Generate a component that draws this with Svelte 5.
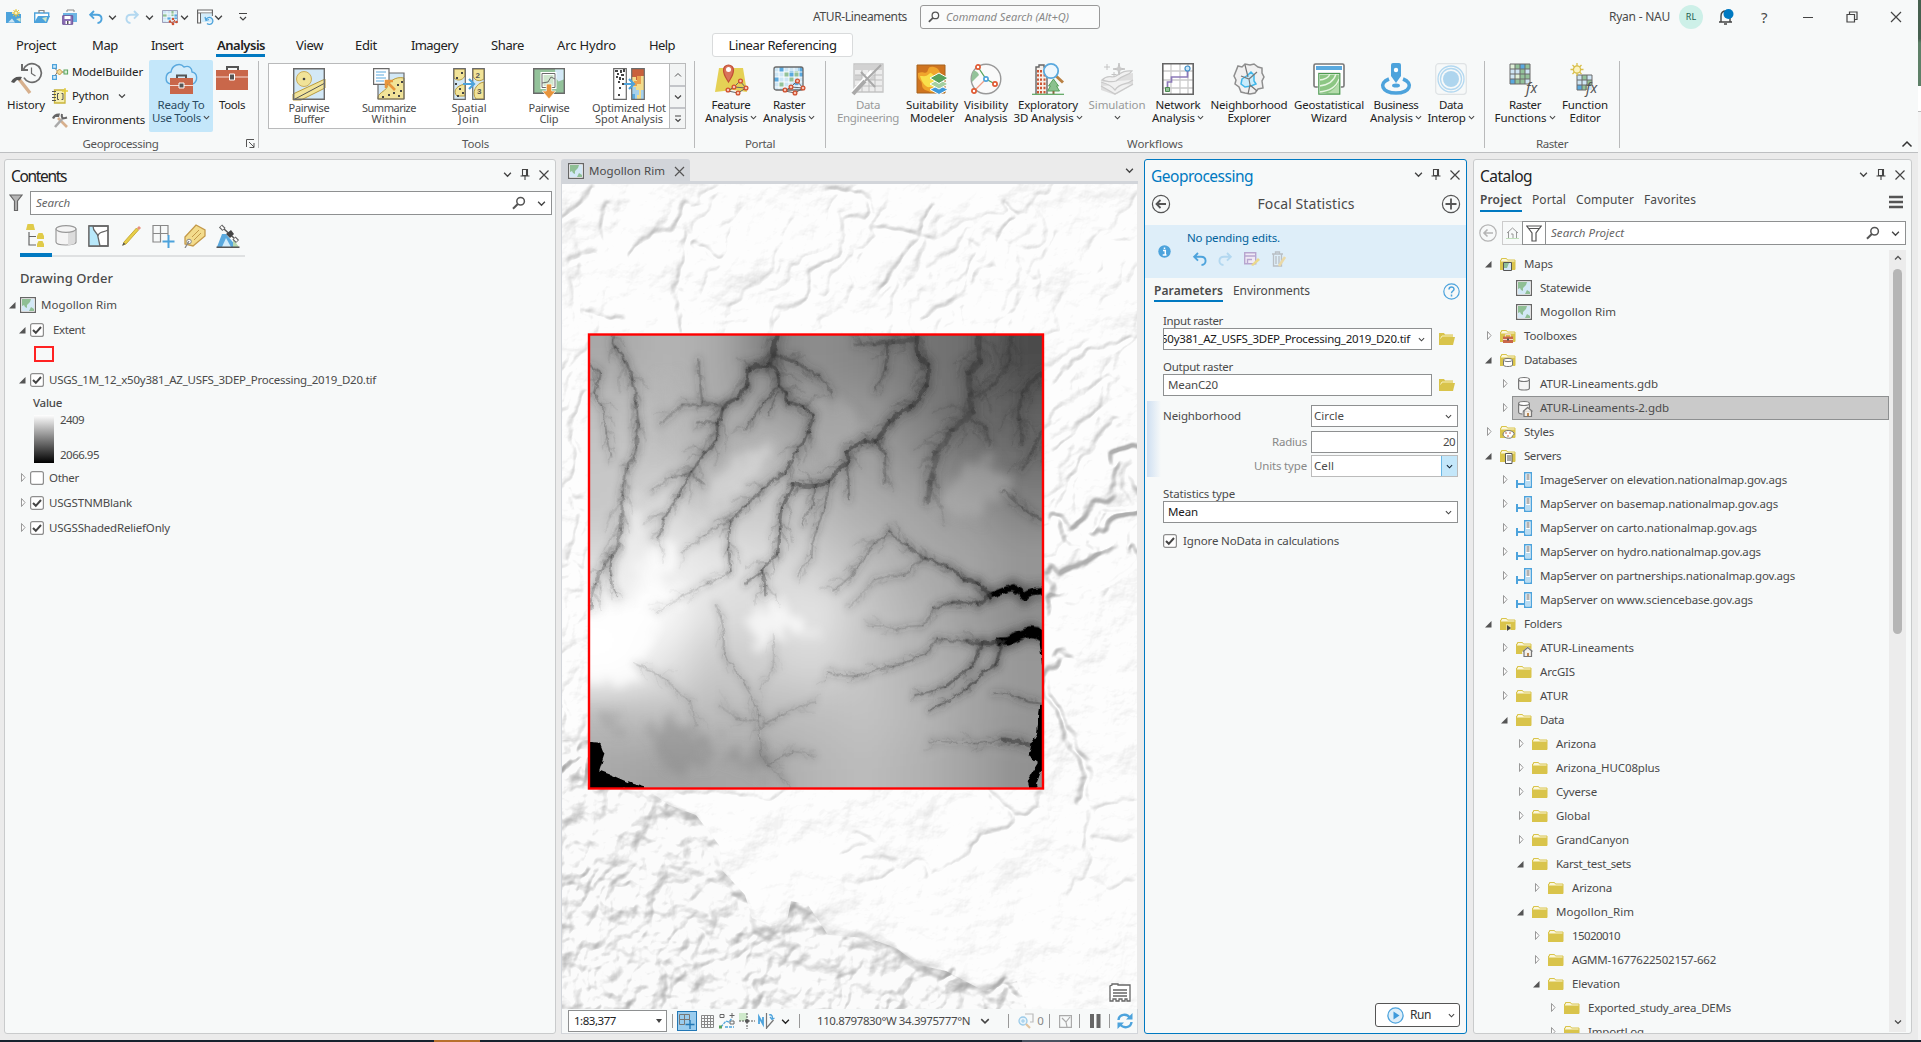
<script>
  // Tightens or loosens letter spacing so that a label takes a known width.
  function fit(node, w) {
    if (!w) return;
    const n = node.textContent.length;
    const r = node.getBoundingClientRect().width;
    node.style.letterSpacing = (w - r) / n + 'px';
  }

  const tabs = [
    ['Project', 40], ['Map', 26], ['Insert', 32], ['Analysis', 48], ['View', 27], ['Edit', 22],
    ['Imagery', 47], ['Share', 33], ['Arc Hydro', 59], ['Help', 26]
  ];
  const gallery = [
    ['pbuffer', 'Pairwise', 41, 'Buffer', 31], ['summarize', 'Summarize', 54, 'Within', 35], ['sjoin', 'Spatial', 35, 'Join', 21],
    ['pclip', 'Pairwise', 41, 'Clip', 19], ['hotspot', 'Optimized Hot', 74, 'Spot Analysis', 68]
  ];
  const portal = [['feature', 'Feature', 39, 'Analysis', 43, 1], ['rasteran', 'Raster', 32, 'Analysis', 43, 1]];
  const workflows = [
    ['dataeng', 'Data', 24, 'Engineering', 62, 0, 1], ['suit', 'Suitability', 52, 'Modeler', 44, 0],
    ['vis', 'Visibility', 44, 'Analysis', 43, 0], ['expl', 'Exploratory', 60, '3D Analysis', 60, 1],
    ['sim', 'Simulation', 57, '', 0, 1, 1], ['net', 'Network', 45, 'Analysis', 43, 1],
    ['neigh', 'Neighborhood', 77, 'Explorer', 43, 0], ['geo', 'Geostatistical', 70, 'Wizard', 36, 0],
    ['biz', 'Business', 45, 'Analysis', 43, 1], ['interop', 'Data', 24, 'Interop', 38, 1]
  ];
  const rasters = [['rfunc', 'Raster', 32, 'Functions', 52, 1], ['fedit', 'Function', 46, 'Editor', 31, 0]];

  // [level, expander, icon, label, width]
  const tree = [
    [0, 'open', 'fmap', 'Maps', 29], [1, '', 'map', 'Statewide', 51], [1, '', 'map', 'Mogollon Rim', 76],
    [0, 'shut', 'ftool', 'Toolboxes', 53], [0, 'open', 'fdb', 'Databases', 53],
    [1, 'shut', 'db', 'ATUR-Lineaments.gdb', 118], [1, 'shut', 'dbhome', 'ATUR-Lineaments-2.gdb', 129, true],
    [0, 'shut', 'fstyle', 'Styles', 30], [0, 'open', 'fserver', 'Servers', 37],
    [1, 'shut', 'server', 'ImageServer on elevation.nationalmap.gov.ags', 247],
    [1, 'shut', 'server', 'MapServer on basemap.nationalmap.gov.ags', 238],
    [1, 'shut', 'server', 'MapServer on carto.nationalmap.gov.ags', 217],
    [1, 'shut', 'server', 'MapServer on hydro.nationalmap.gov.ags', 221],
    [1, 'shut', 'server', 'MapServer on partnerships.nationalmap.gov.ags', 255],
    [1, 'shut', 'server', 'MapServer on www.sciencebase.gov.ags', 213],
    [0, 'open', 'flink', 'Folders', 38], [1, 'shut', 'fhome', 'ATUR-Lineaments', 94],
    [1, 'shut', 'folder', 'ArcGIS', 35], [1, 'shut', 'folder', 'ATUR', 28], [1, 'open', 'folder', 'Data', 24],
    [2, 'shut', 'folder', 'Arizona', 40], [2, 'shut', 'folder', 'Arizona_HUC08plus', 104],
    [2, 'shut', 'folder', 'Cyverse', 41], [2, 'shut', 'folder', 'Global', 34], [2, 'shut', 'folder', 'GrandCanyon', 73],
    [2, 'open', 'folder', 'Karst_test_sets', 75], [3, 'shut', 'folder', 'Arizona', 40],
    [2, 'open', 'folder', 'Mogollon_Rim', 78], [3, 'shut', 'folder', '15020010', 48],
    [3, 'shut', 'folder', 'AGMM-1677622502157-662', 144], [3, 'open', 'folder', 'Elevation', 48],
    [4, 'shut', 'folder', 'Exported_study_area_DEMs', 143], [4, 'shut', 'folder', 'ImportLog', 56]
  ];

  // Mean grey of the elevation raster on a 9 x 9 grid
  const tone = [
    [168, 180, 172, 128, 142, 132, 118, 110, 76],
    [190, 188, 170, 162, 148, 152, 128, 108, 96],
    [198, 196, 176, 190, 166, 160, 146, 118, 112],
    [200, 222, 196, 206, 186, 174, 164, 154, 132],
    [218, 236, 232, 220, 206, 188, 170, 165, 152],
    [252, 250, 222, 220, 230, 198, 180, 158, 140],
    [255, 230, 200, 208, 216, 196, 180, 166, 152],
    [188, 192, 188, 188, 190, 195, 183, 165, 150],
    [168, 162, 166, 168, 182, 188, 178, 164, 145]
  ];
  const cells = tone.flatMap((row, j) =>
    row.map((v, i) => ({
      x: i === 0 ? -60 : 27 + i * 50.4,
      y: j === 0 ? 60 : 155 + j * 50.4,
      w: i === 0 || i === 8 ? 138 : 51,
      h: j === 0 || j === 8 ? 146 : 51,
      c: `rgb(${v},${v},${v})`
    }))
  );

  // Drainage lines of the elevation raster: [start width, end width, darkness, tributary length, x1, y1, ...]
  const rivers = [
    [7, 8, 0.5, 34, 145, 440, 150, 470, 175, 500, 195, 545, 205, 600, 212, 650, 208, 710, 180, 755, 170, 820, 165, 900, 155, 950, 120, 985, 95, 1030, 84, 1090],
    [6, 3, 0.4, 22, 140, 960, 135, 1010, 155, 1060],
    [6, 4, 0.4, 26, 82, 512, 108, 530, 95, 580, 115, 610, 125, 670, 140, 730],
    [15, 6, 0.78, 36, 587, 440, 578, 490, 560, 515],
    [10, 4, 0.74, 38, 560, 515, 510, 520, 505, 560, 480, 590, 440, 615, 425, 650, 425, 685, 390, 720, 355, 765, 320, 820, 280, 880, 262, 925],
    [9, 5, 0.7, 34, 565, 505, 590, 535, 590, 560, 612, 580, 618, 600, 660, 610, 685, 630, 670, 670, 640, 715, 610, 765, 550, 805, 500, 845, 460, 885, 455, 950, 462, 1000],
    [5, 3, 0.25, 24, 460, 880, 390, 915, 330, 955],
    [4, 2, 0.25, 24, 462, 1000, 400, 1030, 330, 1060, 260, 1100],
    [5, 3, 0.5, 20, 585, 565, 550, 600, 520, 640, 500, 665],
    [4, 2, 0.4, 15, 590, 575, 565, 630],
    [9, 4, 0.5, 28, 580, 485, 640, 505, 700, 535, 735, 575],
    [12, 6, 0.74, 38, 965, 440, 968, 490, 995, 510, 990, 560, 950, 610, 890, 645, 855, 690, 825, 690, 775, 715, 780, 740, 725, 790, 690, 800, 630, 795, 600, 850, 595, 900, 590, 960, 545, 1000, 555, 1060],
    [8, 4, 0.45, 22, 855, 690, 880, 720, 878, 790],
    [6, 3, 0.35, 22, 725, 790, 715, 850, 695, 900, 680, 970, 640, 1010],
    [6, 3, 0.4, 16, 775, 745, 780, 830],
    [5, 3, 0.35, 15, 690, 800, 680, 850, 655, 890],
    [6, 3, 0.4, 20, 545, 1000, 500, 1030],
    [16, 14, 0.62, 50, 1132, 440, 1135, 500, 1105, 530, 1110, 580, 1115, 620, 1060, 665, 1015, 720, 1000, 790, 995, 830],
    [9, 4, 0.4, 28, 1110, 640, 1150, 660, 1160, 700],
    [9, 6, 0.6, 34, 1302, 530, 1250, 580, 1240, 640, 1250, 700],
    [11, 5, 0.5, 34, 1220, 440, 1215, 500, 1170, 560, 1120, 590],
    [8, 4, 0.45, 34, 1302, 670, 1275, 720, 1250, 760],
    [8, 4, 0.4, 20, 1302, 878, 1250, 850, 1200, 810],
    [6, 4, 0.35, 26, 375, 500, 385, 600, 440, 610],
    [5, 3, 0.35, 22, 425, 608, 330, 605, 270, 650],
    [5, 3, 0.35, 20, 425, 650, 370, 650],
    [5, 3, 0.3, 20, 355, 765, 300, 775, 245, 810],
    [5, 3, 0.3, 16, 355, 765, 390, 795],
    [12, 5, 0.5, 30, 960, 450, 900, 455, 850, 462, 800, 462],
    [8, 4, 0.45, 26, 885, 460, 880, 520, 850, 570],
    [20, 11, 1, 20, 1303, 1048, 1255, 1060, 1225, 1040, 1165, 1058],
    [10, 6, 0.8, 22, 1165, 1058, 1130, 1030, 1090, 1020, 1050, 990, 985, 970],
    [6, 3, 0.45, 26, 985, 970, 940, 940, 890, 905, 850, 935, 790, 1010, 740, 1045],
    [4, 2, 0.3, 18, 985, 970, 930, 1010, 850, 1020, 780, 1090],
    [8, 4, 0.7, 16, 1165, 1058, 1130, 1080, 1060, 1075, 1010, 1090],
    [4, 2, 0.32, 22, 1010, 1090, 980, 1130, 910, 1140, 830, 1130],
    [28, 16, 1, 12, 1303, 1155, 1270, 1145, 1225, 1160, 1190, 1168],
    [11, 6, 0.8, 16, 1190, 1168, 1140, 1170, 1100, 1165],
    [5, 3, 0.42, 22, 1100, 1165, 1020, 1160, 990, 1195, 900, 1225, 800, 1250, 720, 1240],
    [7, 3, 0.65, 16, 1140, 1175, 1110, 1230, 1040, 1275, 960, 1295],
    [8, 3, 0.7, 16, 1200, 1168, 1180, 1220, 1100, 1280, 1000, 1330],
    [9, 3, 0.65, 20, 1270, 1415, 1200, 1400],
    [4, 2, 0.3, 24, 1200, 1400, 1120, 1410, 1000, 1405],
    [5, 2, 0.42, 22, 1300, 1315, 1240, 1300, 1170, 1290],
    [4, 3, 0.22, 26, 420, 1080, 435, 1110, 445, 1200, 500, 1270, 540, 1340, 540, 1400, 545, 1440, 600, 1490, 620, 1514],
    [4, 3, 0.16, 22, 575, 1150, 575, 1230, 540, 1280],
    [4, 3, 0.22, 26, 540, 1370, 600, 1340, 690, 1310],
    [4, 3, 0.18, 28, 200, 1220, 290, 1260, 350, 1310, 370, 1370],
    [4, 3, 0.18, 24, 540, 1360, 480, 1350, 430, 1320],
    [4, 3, 0.2, 24, 560, 1460, 630, 1430, 690, 1440]
  ];

  let seed = 7;
  const rnd = () => (seed = (seed * 16807) % 2147483647) / 2147483647;

  function strokes() {
    const out = [];
    for (const [w0, w1, dark, len, ...p] of rivers) {
      const n = p.length / 2;
      for (let i = 0; i < n - 1; i++) {
        const [x1, y1, x2, y2] = p.slice(i * 2, i * 2 + 4);
        const f = i / (n - 1);
        const w = w0 + (w1 - w0) * f;
        const mx = (x1 + x2) / 2 + (rnd() - 0.5) * 9;
        const my = (y1 + y2) / 2 + (rnd() - 0.5) * 9;
        out.push({ d: `M${x1} ${y1}L${mx.toFixed(1)} ${my.toFixed(1)}L${x2} ${y2}`, w, o: dark > 0.95 ? 1 : dark * (1 - f * 0.45), main: true });
        const L = Math.hypot(x2 - x1, y2 - y1);
        const ux = (x2 - x1) / L;
        const uy = (y2 - y1) / L;
        const k = Math.max(1, Math.round(L / 17));
        for (let j = 0; j < k; j++) {
          const t = (j + rnd()) / k;
          const s = rnd() > 0.5 ? 1 : -1;
          const l = len * (0.35 + rnd() * rnd() * 1.6);
          const a = 0.3 + rnd() * 0.8;
          const dx = ux * a - uy * s;
          const dy = uy * a + ux * s;
          const sx = x1 + (x2 - x1) * t;
          const sy = y1 + (y2 - y1) * t;
          const bx = sx + dx * l * 0.55;
          const by = sy + dy * l * 0.55;
          const ex = bx + (ux * 0.9 + dx * 0.4) * l * 0.5;
          const ey = by + (uy * 0.9 + dy * 0.4) * l * 0.5;
          const c = [sx, sy, bx, by, ex, ey].map((v) => v.toFixed(1));
          const o = Math.min(dark, 0.55) * 0.38;
          out.push({ d: `M${c[0]} ${c[1]}L${c[2]} ${c[3]}`, w: Math.min(w * 0.7, 7), o, main: false });
          out.push({ d: `M${c[2]} ${c[3]}L${c[4]} ${c[5]}`, w: 4, o: o * 0.65, main: false });
        }
      }
    }
    return out;
  }
  const lines = strokes();

  // A meandering creek that starts at x, y and heads along angle a
  function creek(x, y, a, steps, step) {
    let d = `M${x.toFixed(0)} ${y.toFixed(0)}`;
    for (let i = 0; i < steps; i++) {
      const b = a + (rnd() - 0.5) * 1.3;
      x += Math.cos(b) * step;
      y += Math.sin(b) * step;
      d += `L${x.toFixed(0)} ${y.toFixed(0)}`;
    }
    return d;
  }
  let creeks = '';
  for (let i = 0; i < 60; i++) creeks += creek(rnd() * 600, rnd() * 190, 2.1 + (rnd() - 0.5) * 0.9, 3 + Math.floor(rnd() * 6), 12);
  for (let i = 0; i < 18; i++) creeks += creek(490 + rnd() * 100, 150 + rnd() * 220, 2.3 + (rnd() - 0.5) * 0.5, 6, 12);
  for (let i = 0; i < 14; i++) creeks += creek(rnd() * 40, 150 + rnd() * 400, 1.9, 6, 11);
  let gullies = '';
  for (let i = 0; i < 210; i++) {
    const x = rnd() * 470;
    const rim = x < 190 ? 600 + x * 0.75 : 742 + (x - 190) * 0.22;
    gullies += creek(x, rim + rnd() * 210, 2.05 + (rnd() - 0.5) * 0.4, 3 + Math.floor(rnd() * 5), 8);
  }
</script>

{#snippet t(text, w, cls = '')}<span class="t {cls}" use:fit={w}>{text}</span>{/snippet}

{#snippet chev(s = 8, c = '#444')}
  <svg class="chev" width={s} height={s} viewBox="0 0 8 8" fill="none" stroke={c} stroke-width="1.200"><path d="M1 2.500 4 5.500 7 2.500" /></svg>
{/snippet}

{#snippet mag(c = '#555', s = 14)}
  <svg width={s} height={s} viewBox="0 0 14 14" fill="none" stroke={c} stroke-width="1.500"><circle cx="8.600" cy="5.200" r="3.800" /><path d="M5.800 8 1 12.800" stroke-width="2" /></svg>
{/snippet}

{#snippet winbtns()}
  <div class="winbtns">
    {@render chev(9)}
    <svg width="10" height="14" viewBox="0 0 10 14" fill="none" stroke="#444" stroke-width="1.100"><path d="M2.500 1.500h5v6h-5zM6.500 1.500v6M.5 8h9M5 8v4" /></svg>
    <svg width="12" height="12" viewBox="0 0 12 12" stroke="#444" stroke-width="1.200"><path d="M1.500 1.500l9 9M10.500 1.500l-9 9" /></svg>
  </div>
{/snippet}

{#snippet nodes()}
  <path d="M12 28 22 30 30 25 24 18 18 24zM12 28 18 24 30 25" fill="none" stroke="#666" />
  <g fill="#f7c4b5" stroke="#d0512f" stroke-width="1.300"><circle cx="12" cy="27" r="1.900" /><circle cx="22" cy="30" r="1.900" /><circle cx="30" cy="25" r="1.900" /><circle cx="24.500" cy="18" r="1.900" /><circle cx="18" cy="24" r="1.900" /></g>
{/snippet}

{#snippet big(name)}
  <svg class="big" width="32" height="32" viewBox="0 0 32 32" fill="none" overflow="visible">
    {#if name === 'history'}
      <circle cx="22" cy="10" r="9.300" stroke="#6b6b6b" stroke-width="1.700" stroke-dasharray="50 8" transform="rotate(-160 22 10)" />
      <path d="M21.500 4.500v6l4 2.500" stroke="#6b6b6b" stroke-width="1.200" /><path d="M12 1v6h6" stroke="#6b6b6b" stroke-width="2" />
      <path d="M9 16 20 30" stroke="#d7b08d" stroke-width="3.400" /><path d="M1 19c2-4 5-6 11-5l-2 3.500-3-.5-3 3z" fill="#555" />
    {:else if name === 'ready'}
      <path d="M6 21C-1 20 0 10 6 9 7 2 15-1 19 4c5-2 8 1 8 5 6 1 6 9 1 12" fill="#d3ecfa" stroke="#5aa9de" stroke-width="1.400" />
      <path d="M12 15v-2.500h9V15" stroke="#555" stroke-width="2" /><path d="M5 15h23v16H5z" fill="#c9674a" />
      <path d="M5 22.500h23" stroke="#f5dcd4" /><path d="M14 20h5v5h-5z" fill="#555" stroke="#fff" />
    {:else if name === 'tools'}
      <path d="M11 7V4h11v3" stroke="#555" stroke-width="2" /><path d="M0 7h32v20H0z" fill="#c9674a" />
      <path d="M0 14h32" stroke="#f5dcd4" /><path d="M13.500 11h5v6h-5z" fill="#555" stroke="#fff" />
    {:else if name === 'pbuffer'}
      <path d="M.5.5h31v31H.5z" fill="#d3e8f6" /><circle cx="11" cy="11" r="7.500" fill="#f1e398" stroke="#c9ad5c" /><circle cx="11" cy="11" r="1.300" fill="#444" />
      <path d="M0 26 32 11v9L8 32H0z" fill="#f1e398" stroke="#b79a3f" /><path d="M2 31 32 15" stroke="#555" /><path d="M.7.7h30.600v30.600H.7z" stroke="#6a6a6a" stroke-width="1.400" />
    {:else if name === 'summarize'}
      <path d="M5 5h26v26H5z" fill="#d3e8f6" /><path d="M5 31c-1-6 7-7 9-12s8-11 17-9v21z" fill="#f1e398" stroke="#b79a3f" />
      <g fill="#444"><path d="M24 16h2v2h-2zM27 22h2v2h-2zM20 24h2v2h-2zM25 27h2v2h-2zM15 26h2v2h-2zM9 28h2v2H9zM28 13h2v2h-2z" /></g>
      <path d="M5 5h26v26H5z" stroke="#6a6a6a" stroke-width="1.200" /><path d="M.6.6H16v15.800H.6z" fill="#fff" stroke="#6a6a6a" stroke-width="1.200" />
      <path d="M3 4h10M3 7h8M3 10h10M3 13h8" stroke="#5aa9de" /><path d="M22 22l-8-8M13 20v-7h7" stroke="#e8953c" stroke-width="2.600" />
    {:else if name === 'sjoin'}
      <path d="M.7.7h11.600v30.600H.7zM19.700.7h11.600v30.600H19.700z" fill="#d3e8f6" />
      <path d="M1 1h11v7c-3 5-8 5-11 2zM12 16v12H4C0 24 2 18 12 16M20 1h11v10c-6 4-11 0-11-4zM31 14v17h-8c-5-6 0-16 8-17" fill="#f1e398" stroke="#b79a3f" />
      <g fill="#444"><path d="M3 9h2v2H3zM8 4h2v2H8zM6 20h2v2H6zM9 24h2v2H9zM4 27h2v2H4zM2 15h2v2H2z" /></g>
      <path d="M.7.7h11.600v30.600H.7zM19.700.7h11.600v30.600H19.700z" stroke="#6a6a6a" stroke-width="1.200" />
      <text x="22.500" y="9.500" class="num">2</text><text x="24" y="26" class="num">3</text>
      <path d="M10 16h10M16 11l5 5-5 5" stroke="#4da3dc" stroke-width="2.200" />
    {:else if name === 'pclip'}
      <path d="M.7.700h30.600v24.600H.7z" fill="#93c29a" stroke="#6a6a6a" stroke-width="1.400" /><path d="M22 1.500h8.500v10l-5 2-3-4z" fill="#d3e8f6" />
      <path d="M9 5.500h13v14H9z" fill="#cfe6cd" stroke="#fff" stroke-width="3" /><path d="M9 5.500h13v14H9zM9 15l6-1 3-5 4 2" stroke="#6a6a6a" />
      <path d="M13.300 16h5.400v7h4L16 31l-6.700-8h4z" fill="#e8953c" stroke="#fff" stroke-width=".7" />
    {:else if name === 'hotspot'}
      <path d="M.7.700h12.600v30.600H.7z" fill="#fff" stroke="#6a6a6a" stroke-width="1.200" /><path d="M18.700.700h12.600v30.600H18.700z" fill="#f3dc8c" />
      <path d="M19 1h12v7h-3v4h-5V9h-4z" fill="#c9603c" /><path d="M24 8h4v8h-4zM21 13h3v5h-3z" fill="#eaa04f" /><path d="M19 19h4v3h3v5h-2v4h-5zM28 22h3v9h-3z" fill="#a5d0ec" />
      <path d="M19 26h3v5h-3z" fill="#5aa9de" /><path d="M18.700.700h12.600v30.600H18.700z" stroke="#6a6a6a" stroke-width="1.200" />
      <g fill="#444"><path d="M2 2h3v2H2zM7 2h2v3H7zM10 1h2v3h-2zM4 5h2v2H4zM8 6h3v2H8zM3 8h2v2H3zM6 9h2v3H6zM9 10h2v2H9zM5 13h2v2H5zM9 15h2v2H9zM6 19h2v2H6zM5 26h2v2H5z" /></g>
      <path d="M11 16h9M16 11l5 5-5 5" stroke="#4da3dc" stroke-width="2.200" />
    {:else if name === 'feature'}
      <path d="M4 5h24l4 24-14-2-18 2z" fill="#e5d155" /><path d="M13.500 19c-3-5-5-7-5-12a5 5 0 0 1 10 0c0 5-2 7-5 12z" fill="#d9735a" stroke="#c24f34" stroke-width="1.200" /><circle cx="13.500" cy="6.500" r="2.500" fill="#fff" />
      <g transform="translate(1 0)">{@render nodes()}</g>
    {:else if name === 'rasteran'}
      <rect x="1" y="4" width="29" height="23" rx="2" fill="#cde6f5" />
      <path d="M6 4h5v5H6zM16 8h5v6h-5zM1 14h5v5H1zM25 4h5v10h-5zM20 18h6v4h-6z" fill="#5aa9de" /><path d="M11 9h5v5h-5zM16 14h5v5h-5zM21 8h5v6h-5zM6 19h5v5H6z" fill="#93c29a" />
      <path d="M6 4v23M11 4v23M16 4v23M21 4v23M26 4v23M1 9h29M1 14h29M1 19h29M1 24h29" stroke="#fff" stroke-width=".9" /><rect x="1" y="4" width="29" height="23" rx="2" stroke="#6a6a6a" stroke-width="1.300" />
      {@render nodes()}
    {:else if name === 'dataeng'}
      <path d="M2 1h29v28H2z" fill="#ececec" stroke="#c4c4c4" stroke-width="1.300" /><path d="M3 2h27v5H3zM3 12h7v5H3z" fill="#d2d2d2" /><path d="M17 12h6v5h-6z" fill="#d2d2d2" /><path d="M3 12h27M3 17h27M3 23h27M10 7v22M17 7v22M23 7v22" stroke="#bebebe" />
      <path d="M1 30 20 9" stroke="#fff" stroke-width="5" /><path d="M1 31 13 18" stroke="#a9a9a9" stroke-width="4" /><path d="M13 18 29 2M9 9l14 15" stroke="#a9a9a9" stroke-width="2" />
    {:else if name === 'suit'}
      <path d="M1 2h28v28H1z" fill="#cf7420" /><path d="M2 10c5-2 7 1 9-1s0-6 7-5 4 8 11 9v17H15c-2-3-9-2-9-8s-5-4-4-12" fill="#f0a52c" /><path d="M4 13c4 0 6 1 9-2s3 1 6 2 5 5 9 5v6H14c-4 1-8-4-10-11" fill="#f9e04b" />
      <path d="M1 2h28v28H1z" stroke="#a6621e" />
      <path d="M23 22l9 4.500-9 5-9-5z" fill="#3f9adb" stroke="#fff" /><path d="M23 16l9 5-9 5-9-5z" fill="#a5d0a0" stroke="#fff" /><path d="M23 10l9 5-9 5.500-9-5.500z" fill="#58a35c" stroke="#fff" />
    {:else if name === 'vis'}
      <circle cx="16" cy="16" r="14.800" stroke="#999" stroke-width="1.400" fill="#fafafa" /><path d="M3 8c2-1 5 1 6 4l-7 7c-1-4 0-8 1-11" fill="#93c29a" />
      <path d="M8 4l8 12 9 5" stroke="#58a35c" stroke-width="1.300" /><path d="M16 16 4 28" stroke="#ef9f86" stroke-width="1.300" />
      <g fill="#fff" stroke="#e05a33" stroke-width="1.700"><circle cx="8" cy="4" r="2.100" /><circle cx="4" cy="28" r="2.100" /><circle cx="25" cy="21" r="2.100" /></g><circle cx="16" cy="16" r="2.100" fill="#fff" stroke="#4da3dc" stroke-width="1.700" />
    {:else if name === 'expl'}
      <path d="M4 31V4h3V2h5v2h3v27" stroke="#666" stroke-width="1.400" fill="#f6efe9" /><path d="M6 7v24M9 7v24M12.500 7v24" stroke="#cc5533" stroke-width="2" stroke-dasharray="2.400 1.800" />
      <path d="M21.500 16l5 7h-2l3 5h-12l3-5h-2z" fill="#8cc08f" stroke="#58a35c" /><path d="M21.500 28v3" stroke="#8a6a40" stroke-width="2" /><path d="M0 31.300h32" stroke="#58a35c" stroke-width="1.200" />
      <path d="M24 13l7 6.500" stroke="#b98043" stroke-width="3" /><circle cx="19" cy="8" r="7.200" fill="#eef7fd" stroke="#5aa9de" stroke-width="1.800" />
    {:else if name === 'sim'}
      <path d="M0 19l14-6 18-3v12L14 32 0 27z" fill="#dedede" /><path d="M0 19c7 2 11 4 14 8 6-8 10-4 18-10M0 23l14 8 18-10M1 17c7-7 9-1 14-4s9-6 16-5c-3 5-8 3-16 10-5 2-9 0-14-1z" fill="#f1f1f1" stroke="#c9c9c9" stroke-width="1.300" />
      <path d="M18 0l1 5 5 1-5 1-1 5-1-5-5-1 5-1zM6 1v6M3 4h6M13 9v5M10.500 11.500h5" stroke="#c4c4c4" fill="#ccc" />
    {:else if name === 'net'}
      <path d="M.8.800h30.400v30.400H.8z" fill="#fff" /><path d="M0 8h32M0 17h32M0 25h32M9 0v32M18 0v32M26 0v32" stroke="#ccc" stroke-width="1.300" /><path d="M.8.800h30.400v30.400H.8z" stroke="#666" stroke-width="1.600" />
      <path d="M5.500 26v-7h4v-5h16V7" stroke="#8c79b8" stroke-width="1.700" /><path d="M3.500 24.500h4v4h-4z" fill="#93c29a" stroke="#4c8a50" /><circle cx="25.500" cy="5.500" r="2.500" fill="#cde6f5" stroke="#3f8fc9" stroke-width="1.200" />
    {:else if name === 'neigh'}
      <path d="M5 3l4 1 3-3 5 1 4-1 4 3 4 1v5l2 4-2 4 1 7-5 1-3 4-5 1-5-1-4-1-2-5-4-3 1-4-2-4 2-5z" fill="#f1f1f1" stroke="#8e8e8e" stroke-width="1.500" />
      <path d="M9 16l6-4 3-3 3 3v6l2 3-5 2-6 1-4-3z" fill="#c9ecfb" stroke="#3fb6ea" stroke-width="1.500" /><path d="M12 2l3 12M24 9l-8 7-8-3M16 16l1 6-2 9M17 22l7 6" stroke="#777" stroke-width="1.200" />
    {:else if name === 'geo'}
      <rect x="1" y="1" width="30" height="23" rx="1.500" fill="#fff" stroke="#777" stroke-width="1.600" /><path d="M3 3h26v4H3z" fill="#5aa9de" /><path d="M5 10h22v12" stroke="#999" />
      <path d="M5.800 10.500h21v20.700h-21z" fill="#8cc683" stroke="#fff" stroke-width="2" /><path d="M27 14v17H12c7-2 14-8 15-17" fill="#b4dcab" />
      <path d="M6 17c6 0 10-3 11-6M6 23c10-1 15-5 17-12M6 29c12-1 18-7 20-13" stroke="#e8f6e3" stroke-width="1.300" /><path d="M5.800 10.500h21v20.700h-21z" stroke="#4c9a50" stroke-width="1.200" />
    {:else if name === 'biz'}
      <path d="M11 2a2 2 0 0 1 2-2h6a2 2 0 0 1 2 2v11l-5 7-5-7z" fill="#4da3dc" /><circle cx="16" cy="7" r="2.200" fill="#fff" /><ellipse cx="16" cy="22.500" rx="4" ry="2" fill="#4da3dc" />
      <path d="M9 16c-11 4-7 14 7 14s18-10 7-14" stroke="#4da3dc" stroke-width="3.600" />
    {:else if name === 'interop'}
      <rect x=".7" y=".7" width="30.600" height="30.600" rx="3" stroke="#dfe3e5" stroke-width="1.200" /><g stroke="#b3d8f0" stroke-width="1.300"><circle cx="16" cy="16" r="13" /><circle cx="16" cy="16" r="10.500" /></g><circle cx="16" cy="16" r="8" fill="#aed5ee" />
    {:else if name === 'rfunc'}
      <path d="M1 1h20v20H1z" fill="#cfe6f5" /><path d="M6 1h5v5H6zM16 1h5v5h-5zM11 6h5v10h-5zM16 11h5v5h-5zM6 16h10v5H6z" fill="#93c29a" /><path d="M11 1h5v5h-5zM1 16h5v5H1z" fill="#5aa9de" /><path d="M1 1h5v5H1zM6 11h5v5H6z" fill="#dff0d8" />
      <path d="M1 1h20v20H1zM6 1v20M11 1v20M16 1v20M1 6h20M1 11h20M1 16h20" stroke="#6a6a6a" /><text x="17" y="30" class="fx">fx</text>
    {:else if name === 'fedit'}
      <path d="M8 12h15v15H8z" fill="#cfe6f5" /><path d="M13 12h5v5h-5zM13 22h5v5h-5zM18 17h5v5h-5z" fill="#93c29a" /><path d="M8 22h5v5H8z" fill="#5aa9de" />
      <path d="M8 12h15v10h-6v5H8zM13 12v15M18 12v10M8 17h15M8 22h10" stroke="#6a6a6a" /><path d="M8 0v13M1.500 6.500h13M3.500 2l9 9M12.500 2l-9 9" stroke="#d9bf4a" stroke-width="1.300" /><circle cx="8" cy="6.500" r="3.600" fill="#fbf3c0" stroke="#d9bf4a" stroke-width="1.300" />
      <text x="17" y="30" class="fx">fx</text>
    {/if}
  </svg>
{/snippet}

{#snippet foldr()}
  <path d="M.5 13.500V4h1V2.500h5L7.500 4h7.500v9.500z" fill="#fbf7dc" stroke="#d9c44b" /><path d="M0 5.500h15V14H0z" fill="#d9c44b" />
{/snippet}
{#snippet house()}
  <path d="M7 11.500 11.700 7.500l4.800 4M8 11v5.500h7.500V11" fill="#f3efe9" stroke="#777" stroke-width="1.200" /><path d="M11 13h2v3h-2z" fill="#c08a50" />
{/snippet}

{#snippet small(name)}
  <svg class="small" width="16" height="16" viewBox="0 0 16 16" fill="none" overflow="visible">
    {#if name === 'folder'}{@render foldr()}
    {:else if name === 'fmap'}{@render foldr()}<path d="M3.500 6.500h8v8h-8z" fill="#d3e8f6" stroke="#555" /><path d="M4 7h5l-2 5H4z" fill="#8fbf95" />
    {:else if name === 'ftool'}{@render foldr()}<path d="M3 8.500h10V15H3z" fill="#c9674a" /><path d="M5.500 8.500v-2h5v2M3 11.500h10" stroke="#f3d5ca" /><path d="M7 10.500h2v2H7z" fill="#555" />
    {:else if name === 'fdb'}{@render foldr()}<path d="M3.500 8v5c0 2 9 2 9 0V8z" fill="#fff" stroke="#777" /><ellipse cx="8" cy="8" rx="4.500" ry="1.600" fill="#fff" stroke="#777" />
    {:else if name === 'fstyle'}{@render foldr()}<path d="M3 10c1-5 9-4 11-1 1 2-2 2-2 4s-9 2-9-3" fill="#fff" stroke="#777" /><path d="M5 9h2M9 9h2M7 12h2" stroke="#c9674a" />
    {:else if name === 'fserver'}{@render foldr()}<path d="M5.500 5.500h6.500V15.500H5.500z" fill="#fff" stroke="#555" /><path d="M7 8h4M7 10h4M7 12h4" stroke="#555" />
    {:else if name === 'flink'}{@render foldr()}<path d="M6 8h5v6H6z" fill="#e9dd8f" /><path d="M7 9l4 3-4 3z" fill="#444" />
    {:else if name === 'fhome'}{@render foldr()}<path d="M6 12 11.700 6.500 18 12v5H7z" fill="#f7f9f9" />{@render house()}
    {:else if name === 'map'}<path d="M.6.600h14.800v14.800H.6z" fill="#fff" stroke="#666" stroke-width="1.200" /><path d="M2 2h12v12H2z" fill="#d3e8f6" /><path d="M2 2h9l-1 3-3 3v3l-2-1-1-2-2 1zM11 10l3 2v2H9z" fill="#8fbf95" />
    {:else if name === 'db' || name === 'dbhome'}<path d="M2.600 3.500v8.700c0 2.400 10.800 2.400 10.800 0V3.500z" fill="#f4f4f4" stroke="#777" stroke-width="1.200" /><ellipse cx="8" cy="3.500" rx="5.400" ry="2" fill="#fff" stroke="#777" stroke-width="1.200" />
      {#if name === 'dbhome'}<path d="M6 12 11.700 6.500 18 12v5H7z" fill="#cacaca" />{@render house()}{/if}
    {:else if name === 'server'}<path d="M8.700.700h6.600v14.600H8.700z" fill="#fff" stroke="#4da3dc" stroke-width="1.400" /><path d="M10.500 3h3M10.500 5h3M10.500 7h3" stroke="#666" /><path d="M9.500 9h5v5h-5z" fill="#b9dcf2" /><path d="M1 8v8M1 12h7" stroke="#4da3dc" stroke-width="2" />
    {:else if name === 'open'}<path d="M11.500 5v6.500H5z" fill="#555" />
    {:else if name === 'shut'}<path d="M7.500 3.500v8l3.500-4z" fill="#fff" stroke="#999" />
    {:else if name === 'model'}<path d="M.6.600h3.800v3.800H.6zM.6 11.500h3.800v3.800H.6z" fill="#d3ecfa" stroke="#4da3dc" stroke-width="1.200" /><path d="M3 4.500l3 3-3 4M9 8h3" stroke="#777" /><path d="M7.500 5 10.500 8l-3 3-3-3z" fill="#f3dc9c" stroke="#c9973c" /><rect x="12" y="6" width="3.600" height="4" fill="#d9efd8" stroke="#58a35c" />
    {:else if name === 'python'}<path d="M2.500 2H13v13H2.500z" fill="#f5eeb0" stroke="#c9b43a" stroke-width="1.300" /><path d="M0 3.500h4M0 6.500h4M0 9.500h4M0 12.500h4" stroke="#555" /><path d="M7 5.500H5.500v6H7M9.500 5.500H11v6H9.500" stroke="#555" /><path d="M13 0v6M10 3h6" stroke="#e5cf3f" stroke-width="1.400" />
    {:else if name === 'env'}<path d="M6 6l9 9" stroke="#d7b08d" stroke-width="2.600" /><path d="M3 15 11 6" stroke="#aaa" stroke-width="2.600" /><path d="M0 6C1 3 4 1 8 1.500L7 5 3.500 5 2 7z" fill="#666" /><path d="M10 2c-1 4 1 5 5 3.500" stroke="#666" stroke-width="2" />
    {:else if name === 'qnew'}<path d="M1 5h15v9H1z" fill="#4da3dc" /><path d="M1 3h6v3H1z" fill="#4da3dc" /><path d="M3 13.500 7 9.500l3 4z" fill="#cde6f5" /><path d="M11 10l4.500-1v4z" fill="#cfe7c9" /><path d="M11 0v8M7 4h8M8.500 1l5.500 6M14 1 8 7" stroke="#e0c63e" /><circle cx="11" cy="4" r="2" fill="#fbf3c0" stroke="#d9bf4a" />
    {:else if name === 'qopen'}<path d="M.7 14V4h14v4" stroke="#4da3dc" stroke-width="1.400" fill="#fff" /><path d="M5 4V1.500h5V4" stroke="#888" stroke-width="1.200" /><path d="M0 14 4 7h12l-3 7z" fill="#4da3dc" /><path d="M8 9l5-1-1 5z" fill="#cfe7c9" />
    {:else if name === 'qsave'}<path d="M1 4h14v9H1z" fill="#6db5e4" /><path d="M5 3V1h7v2" stroke="#888" /><path d="M.7 6.700h10v8.600H.7z" fill="#8c6fb5" stroke="#6e5699" /><path d="M2.500 7h6v3h-6zM3.500 12h5v3h-5z" fill="#fff" /><path d="M5 12h1.500v3H5z" fill="#555" />
    {:else if name === 'undo' || name === 'redo'}
      <g transform={name === 'redo' ? 'matrix(-1 0 0 1 14 0)' : ''} stroke={name === 'redo' ? '#b3d8f0' : '#4da3dc'} stroke-width="1.900"><path d="M5 2 1.200 5.800 5 9.600M1.500 5.800H8c6 0 6 8 .5 8.200" /></g>
    {:else if name === 'qmap'}<path d="M1 2h14v11H1z" fill="#cde6f5" /><path d="M1 5h4v3H1zM9 2h3v5H9z" fill="#8fbf95" /><path d="M5 8h4v3H5zM12 5h3v5h-3z" fill="#5aa9de" /><path d="M1 5h14M1 8h14M1 11h14M5 1v13M9 1v13M12 1v13" stroke="#fff" stroke-width=".7" /><path d="M.5 1.500h15v12H.5z" stroke="#88a" stroke-width=".8" /><path d="M9 14l4-2-2-2" stroke="#d0512f" /><g fill="#d0512f"><circle cx="8" cy="12.500" r="1.300" /><circle cx="11" cy="10" r="1.300" /><circle cx="14.500" cy="13" r="1.300" /><circle cx="11" cy="15" r="1.300" /></g>
    {:else if name === 'qlay'}<path d="M.6 1h14.800v3H.6zM.6 4h3v10h-3z" fill="#fff" stroke="#666" stroke-width="1.200" /><path d="M4 4.500h11V13H4z" fill="#d3ecfa" /><path d="M15.400 4v3" stroke="#666" /><path d="M9 11a3.500 3.500 0 1 1 1 3.500M8 8l1 3.500 3-1" stroke="#4da3dc" stroke-width="1.300" />
    {/if}
  </svg>
{/snippet}

{#snippet cmd(c)}
  <div class="cmd" class:off={c[6]}>
    {@render big(c[0])}
    <div class="lab">{@render t(c[1], c[2])}</div>
    <div class="lab">{#if c[3]}{@render t(c[3], c[4])}{/if}{#if c[5]}{@render chev(7)}{/if}</div>
  </div>
{/snippet}

{#snippet check(on)}
  <svg class="check" width="14" height="14" viewBox="0 0 14 14" fill="none"><rect x=".6" y=".6" width="12.800" height="12.800" rx="2" fill="#fff" stroke="#8e8e8e" stroke-width="1.200" />{#if on}<path d="M3 7l2.800 2.800L11 4" stroke="#444" stroke-width="2" />{/if}</svg>
{/snippet}

{#snippet ground()}
  <rect x="-60" y="-60" width="700" height="960" fill="#a0a0a0" />
  <path d="M-60 560H60L76 608 103 627 130 637 153 667 156 690 179 717 187 740 210 747 227 743 231 723 244 727 264 757 306 760 332 770 355 787 382 793 420 813 453 803 463 900H-60z" fill="#6c6c6c" filter="url(#edge)" />
  <g fill="none" filter="url(#bank)">
    <path d={creeks} stroke="#929292" stroke-width="4" />
    <path d={gullies} stroke="#5c5c5c" stroke-width="4" />
    <g transform="translate(-12 600) scale(.38265 .33333)" stroke-width="13">
      <path d="M1130 30 1210 95 1250 110 1278 90 1275 40 M1215 100 1200 130 1165 155 1125 160 1110 215 1050 240 990 300" stroke="#868686" />
      <path d="M820 235 905 235 910 260 850 300 770 320 M930 270 960 240 985 260 990 300 M330 30 540 50 620 40 M800 150 830 190 770 225 M1390 0 1410 100 1405 290 1450 330 1530 300 M1420 100 1530 60 M1420 180 1520 185 M1410 300 1350 360" stroke="#8e8e8e" />
    </g>
    <g transform="translate(-2 -30) scale(.3699 .42092)" stroke-width="12">
      <path d="M1490 730 1560 720 1520 780 1560 830 1460 840 1400 920 1470 930 1560 870 1500 960 1420 1000 1340 1030 1310 1000 M1560 950 1480 1010 1400 1040 1320 1080" stroke="#585858" stroke-width="34" />
      <path d="M1310 860 1350 880 1370 910 1420 935 M1530 740 1500 800 1540 850 M1315 1100 1370 1075 M1340 1190 1370 1210 1330 1250 1320 1290 1350 1340 1380 1380 1380 1420 1430 1470 1415 1560" stroke="#707070" stroke-width="18" />
      <path d="M10 170 60 130 100 85 M15 270 60 250 110 240 M60 380 110 400 180 400 M730 90 830 110 840 150 780 180 750 250 700 290 640 380 590 410 M140 120 120 210 M340 190 310 300 330 430 M1010 120 970 210 900 290 870 330 M1130 220 1100 330 1040 380 M1170 270 1060 380 980 400 M840 190 1000 215 M350 220 440 260 M180 260 300 190 350 120 M1200 110 1230 160 1190 220" stroke="#858585" />
      <path d="M70 570 30 640 45 720 15 800 60 870 15 960 60 1000 M1330 560 1420 490 1540 440 M1320 640 1400 580 1500 540 M1330 720 1480 600 M1340 850 1420 740 1510 640 M0 1300 25 1330 15 1400 M5 1420 60 1440 20 1490" stroke="#888" />
    </g>
  </g>
{/snippet}

<div class="desktop">
  <div class="app">
    <header>
      <div class="titlebar">
        <div class="qat">
          {@render small('qnew')}{@render small('qopen')}{@render small('qsave')}{@render small('undo')}{@render chev(9)}{@render small('redo')}{@render chev(9)}{@render small('qmap')}{@render chev(9)}{@render small('qlay')}{@render chev(9)}
          <svg width="10" height="10" viewBox="0 0 10 10" fill="none" stroke="#444" stroke-width="1.200"><path d="M1 1.500h8M2 5l3 3 3-3" /></svg>
        </div>
        <div class="ptitle">{@render t('ATUR-Lineaments', 94, 's12')}</div>
        <div class="cmdsearch">{@render mag('#555', 12)}{@render t('Command Search (Alt+Q)', 123, 'it s11')}</div>
        <div class="user">{@render t('Ryan - NAU', 61, 's12')}</div>
        <div class="avatar">RL</div>
        <svg class="bell" width="16" height="16" viewBox="0 0 16 16" fill="none"><path d="M1 13h13M3 13V7c0-3 2-5 5-5M12 9v4M6 15h3" stroke="#444" stroke-width="1.400" /><circle cx="10.500" cy="5" r="5" fill="#0079c1" /></svg>
        <div class="help">?</div>
        <svg width="12" height="12" viewBox="0 0 12 12" stroke="#444"><path d="M1 6.500h10" /></svg>
        <svg width="12" height="12" viewBox="0 0 12 12" fill="none" stroke="#444" stroke-width="1.200"><path d="M1 3.500h7.500V11H1zM3.500 3.500V1H11v7.500H8.500" /></svg>
        <svg width="12" height="12" viewBox="0 0 12 12" stroke="#444" stroke-width="1.200"><path d="M1 1l10 10M11 1 1 11" /></svg>
      </div>
      <nav class="tabs">
        {#each tabs as [n, w]}<div class="tab" class:on={n === 'Analysis'}>{@render t(n, w, 's13')}</div>{/each}
        <div class="ctx">{@render t('Linear Referencing', 108, 's13')}</div>
      </nav>
      <div class="ribbon">
        <section class="g1">
          <div class="row gp">
            <div class="cmd">{@render big('history')}<div class="lab">{@render t('History', 38)}</div></div>
            <div class="stack">
              <div>{@render small('model')}{@render t('ModelBuilder', 71)}</div>
              <div>{@render small('python')}{@render t('Python', 37)}<i></i>{@render chev(8)}</div>
              <div>{@render small('env')}{@render t('Environments', 73)}</div>
            </div>
            <div class="cmd ready">{@render big('ready')}<div class="lab">{@render t('Ready To', 47)}</div><div class="lab">{@render t('Use Tools', 49)}{@render chev(7)}</div></div>
            <div class="cmd">{@render big('tools')}<div class="lab">{@render t('Tools', 26)}</div></div>
          </div>
          <footer>{@render t('Geoprocessing', 76)}<svg class="launch" width="9" height="9" viewBox="0 0 9 9" fill="none" stroke="#555"><path d="M.5 8V.5H8M3 3l5 5M8 4v4.500H3.500" /></svg></footer>
        </section>
        <section class="g2">
          <div class="gallery">
            {#each gallery as c}<div class="cmd gal">{@render big(c[0])}<div class="lab">{@render t(c[1], c[2])}</div><div class="lab">{@render t(c[3], c[4])}</div></div>{/each}
            <div class="scroll">
              <div><svg width="8" height="8" viewBox="0 0 8 8" fill="none" stroke="#555"><path d="M1 5.500 4 2.500 7 5.500" /></svg></div>
              <div>{@render chev(8)}</div>
              <div><svg width="8" height="8" viewBox="0 0 8 8" fill="none" stroke="#444" stroke-width="1.200"><path d="M1 1h6M1.500 4 4 6.500 6.500 4" /></svg></div>
            </div>
          </div>
          <footer>{@render t('Tools', 27)}</footer>
        </section>
        <section class="g3"><div class="row pg">{#each portal as c}{@render cmd(c)}{/each}</div><footer>{@render t('Portal', 30)}</footer></section>
        <section class="g4"><div class="row wf">{#each workflows as c}{@render cmd(c)}{/each}</div><footer>{@render t('Workflows', 56)}</footer></section>
        <section class="g5"><div class="row rs">{#each rasters as c}{@render cmd(c)}{/each}</div><footer>{@render t('Raster', 32)}</footer></section>
        <svg class="collapse" width="12" height="12" viewBox="0 0 12 12" fill="none" stroke="#333" stroke-width="1.500"><path d="M1.500 8.500 6 4l4.500 4.500" /></svg>
      </div>
    </header>

    <main>
      <aside class="panel contents">
        <div class="phead">{@render t('Contents', 55, 's16')}{@render winbtns()}</div>
        <div class="csearch">
          <svg width="14" height="18" viewBox="0 0 14 18" fill="#b5b5b5" stroke="#666" stroke-width="1.200"><path d="M1 1h12l-4.500 6v9.500h-3V7z" /></svg>
          <div class="box">{@render t('Search', 34, 'it')}<b></b>{@render mag()}{@render chev(9)}</div>
        </div>
        <div class="views">
          <svg width="24" height="24" viewBox="0 0 24 24" fill="#e0cb4a"><path d="M4 6l1.500-6h6L13 6zM15 12l1.500-3h4L22 12v3h-7zM15 20l1.500-3h4L22 20v3h-7z" /><path d="M7 8v13h7M7 12.500h7" fill="none" stroke="#666" stroke-width="1.200" /></svg>
          <svg width="24" height="24" viewBox="0 0 24 24" fill="#f4f4f4" stroke="#999" stroke-width="1.200"><path d="M2 5v13c0 4 20 4 20 0V5z" /><path d="M14 8v13c5 0 7-1 7-3V6z" fill="#dcdcdc" stroke="none" /><ellipse cx="12" cy="5" rx="10" ry="3.300" /></svg>
          <svg width="24" height="24" viewBox="0 0 24 24" fill="#fff" stroke="#666" stroke-width="1.300"><path d="M2 2h19v20H2z" /><path d="M2 2h4c0 7 5 6 5 11l2 9H2z" fill="#b8e8fa" stroke="none" /><path d="M6 2c0 7 5 6 5 11l2 9M11 12c1-5 5-3 10-6M2 2h19v20H2z" fill="none" /></svg>
          <svg width="24" height="24" viewBox="0 0 24 24" fill="none"><path d="M4 21l1-3L17.500 4l2 2L7 20z" fill="#e8cf48" stroke="#c9ad3c" /><path d="M18 4l2-2 2 2-2 2z" fill="#e8907c" /><path d="M3 22l1.500-3.500L6.500 20z" fill="#555" /></svg>
          <svg width="24" height="24" viewBox="0 0 24 24" fill="none"><path d="M2 1.500h15v8H2zM2 9.500h7.500V18H2zM9.500 1.500v8M17 9.500v2" stroke="#888" stroke-width="1.200" /><path d="M17.500 11v13M11.500 17.500h12" stroke="#4da3dc" stroke-width="2" /></svg>
          <svg width="24" height="24" viewBox="0 0 24 24" fill="none"><path d="M2 13 13 1l9 5v6L10 22 2 20z" fill="#f3dc8c" stroke="#c49a4a" stroke-width="1.300" /><path d="M9 13l7-7M11 16l7-7" stroke="#c49a4a" /><circle cx="6" cy="17.500" r="2.300" fill="#fff" stroke="#888" /><path d="M2 24l4-7" stroke="#888" stroke-width="1.300" /></svg>
          <svg width="24" height="24" viewBox="0 0 24 24" fill="none"><path d="M1 23l5-13h4l11 13z" fill="#5aa9de" /><path d="M6 23l4-9 5 9z" fill="#d3ecfa" /><path d="M17 15l6 8h-6z" fill="#b7d9b1" /><path d="M.5 23.300h23" stroke="#555" stroke-width="1.500" /><path d="M4.500 2 8 5.500M18 14l3.500 3.500" stroke="#666" stroke-width="4.500" /><path d="M5 2.500 7.500 5M18.500 14.500 21 17" stroke="#fff" stroke-width="2" /><path d="M8 5l10 9" stroke="#555" stroke-width="1.500" /><path d="M10 10l5-4 3 4-4 4z" fill="#444" /></svg>
        </div>
        <div class="underline"><b></b></div>
        <div class="dorder">{@render t('Drawing Order', 93, 's13 m')}</div>
        <div class="ly l0">{@render small('open')}{@render small('map')}{@render t('Mogollon Rim', 76)}</div>
        <div class="ly l1 ext">{@render small('open')}{@render check(true)}{@render t('Extent', 32)}</div>
        <div class="swatch"></div>
        <div class="ly l1">{@render small('open')}{@render check(true)}{@render t('USGS_1M_12_x50y381_AZ_USFS_3DEP_Processing_2019_D20.tif', 327)}</div>
        <div class="vlabel">{@render t('Value', 29, 'm')}</div>
        <div class="ramp"><div class="bar"></div><div class="vals">{@render t('2409', 24)}{@render t('2066.95', 39)}</div></div>
        <div class="ly l1">{@render small('shut')}{@render check(false)}{@render t('Other', 30)}</div>
        <div class="ly l1">{@render small('shut')}{@render check(true)}{@render t('USGSTNMBlank', 83)}</div>
        <div class="ly l1">{@render small('shut')}{@render check(true)}{@render t('USGSShadedReliefOnly', 121)}</div>
      </aside>

      <div class="view">
        <div class="vtabs">
          <div class="vtab">{@render small('map')}{@render t('Mogollon Rim', 76)}<svg width="11" height="11" viewBox="0 0 11 11" stroke="#555" stroke-width="1.200"><path d="M1 1l9 9M10 1 1 10" /></svg></div>
          {@render chev(9)}
        </div>
        <div class="mapbox">
          <svg class="map" width="575" height="825" viewBox="0 4 575 825">
            <defs>
              <filter id="edge" x="-10%" y="-10%" width="120%" height="120%"><feGaussianBlur stdDeviation="4" /></filter>
              <filter id="bank" filterUnits="userSpaceOnUse" x="-50" y="-50" width="680" height="930"><feGaussianBlur stdDeviation="1.600" /></filter>
              <filter id="relief" filterUnits="userSpaceOnUse" x="-30" y="-30" width="640" height="890" color-interpolation-filters="sRGB">
                <feTurbulence type="fractalNoise" baseFrequency=".03" numOctaves="3" seed="6" result="w" />
                <feDisplacementMap in="SourceGraphic" in2="w" scale="22" xChannelSelector="R" yChannelSelector="G" result="d" />
                <feColorMatrix in="d" type="matrix" values="0 0 0 0 0  0 0 0 0 0  0 0 0 0 0  1 0 0 0 0" result="h" />
                <feTurbulence type="fractalNoise" baseFrequency=".014" numOctaves="5" seed="11" result="n" />
                <feComposite in="h" in2="n" operator="arithmetic" k2=".8" k3=".3" result="s" />
                <feGaussianBlur in="s" stdDeviation="1.100" result="b" />
                <feDiffuseLighting in="b" surfaceScale="22" diffuseConstant="1.180" lighting-color="#fff"><feDistantLight azimuth="240" elevation="60" /></feDiffuseLighting>
                <feColorMatrix type="matrix" values=".31 0 0 0 .682  0 .31 0 0 .682  0 0 .31 0 .682  0 0 0 1 0" />
                <feGaussianBlur stdDeviation=".6" />
              </filter>
              <filter id="rough" filterUnits="userSpaceOnUse" x="-30" y="540" width="640" height="320" color-interpolation-filters="sRGB">
                <feTurbulence type="fractalNoise" baseFrequency=".03" numOctaves="3" seed="6" result="w" />
                <feDisplacementMap in="SourceGraphic" in2="w" scale="22" xChannelSelector="R" yChannelSelector="G" result="d" />
                <feColorMatrix in="d" type="matrix" values="0 0 0 0 0  0 0 0 0 0  0 0 0 0 0  1 0 0 0 0" result="h" />
                <feTurbulence type="fractalNoise" baseFrequency=".03" numOctaves="4" seed="21" result="n" />
                <feComposite in="h" in2="n" operator="arithmetic" k2=".9" k3=".5" result="s" />
                <feGaussianBlur in="s" stdDeviation="1" result="b" />
                <feDiffuseLighting in="b" surfaceScale="25" diffuseConstant="1.200" lighting-color="#fff"><feDistantLight azimuth="240" elevation="60" /></feDiffuseLighting>
                <feColorMatrix type="matrix" values=".33 0 0 0 .655  0 .33 0 0 .655  0 0 .33 0 .655  0 0 0 1 0" />
                <feGaussianBlur stdDeviation=".6" />
              </filter>
              <filter id="warp" x="-5%" y="-5%" width="110%" height="110%">
                <feTurbulence type="fractalNoise" baseFrequency=".06" numOctaves="2" seed="3" />
                <feDisplacementMap in="SourceGraphic" scale="13" xChannelSelector="R" yChannelSelector="G" /><feGaussianBlur stdDeviation="1.900 1.700" />
              </filter>
              <filter id="halo" x="-5%" y="-5%" width="110%" height="110%"><feGaussianBlur stdDeviation="9" /></filter>
              <filter id="soft" filterUnits="userSpaceOnUse" x="-60" y="60" width="640" height="650"><feGaussianBlur stdDeviation="19" /></filter>
              <filter id="mid" x="-20%" y="-20%" width="140%" height="140%">
                <feTurbulence type="fractalNoise" baseFrequency=".035" numOctaves="3" seed="8" />
                <feDisplacementMap in="SourceGraphic" scale="90" xChannelSelector="R" yChannelSelector="G" /><feGaussianBlur stdDeviation="11" />
              </filter>
              <clipPath id="dem"><rect x="27" y="155" width="454" height="453" /></clipPath>
              <clipPath id="scarp"><path d="M0 560H60L80 606 107 625 134 635 157 665 160 690 183 715 190 738 210 745 225 741 229 721 246 725 266 755 306 758 334 768 357 785 384 791 422 811 455 801 465 829H0z" /></clipPath>
            </defs>
            <g filter="url(#relief)">{@render ground()}</g>
            <g clip-path="url(#scarp)"><g filter="url(#rough)">{@render ground()}</g></g>
            <g clip-path="url(#dem)">
              <g filter="url(#soft)">{#each cells as c}<rect x={c.x} y={c.y} width={c.w} height={c.h} fill={c.c} />{/each}</g>
              <g transform="translate(-2 -30) scale(.3699 .42092)">
                <g filter="url(#mid)">
                  <path d="M60 1110 150 1090 230 960 290 920 330 960 260 1040 350 1040 260 1130 230 1200 200 1270 60 1260z" fill="#fff" opacity=".75" />
                  <path d="M380 900 400 830 440 760 520 710 580 700 530 780 450 840z" fill="#dedede" opacity=".6" />
                  <path d="M500 1100 590 1060 640 1100 700 1160 600 1150 540 1190z" fill="#fff" opacity=".7" />
                  <path d="M180 800 220 860 250 960 200 1080 150 1080z" fill="#f1f1f1" opacity=".7" />
                  <path d="M250 560 300 520 330 600 260 740z" fill="#b6b6b6" opacity=".5" />
                  <path d="M1020 860 1060 780 1150 730 1230 790 1130 870z" fill="#b4b4b4" opacity=".5" />
                  <path d="M640 560 760 600 820 670 730 760 690 680z" fill="#b4b4b4" opacity=".45" />
                  <path d="M230 1380 300 1350 420 1400 380 1480 300 1480zM430 1430 570 1420 560 1480 480 1470zM90 1330 160 1350 150 1380z" fill="#8a8a8a" opacity=".5" />
                </g>
                <g fill="none" stroke="#3a3a3a" stroke-linecap="round" filter="url(#halo)">
                  {#each lines as l}<path d={l.d} stroke-width={l.main ? 12 + Math.min(l.w, 16) * 2.2 : 12} opacity={l.main ? l.o * 0.3 : l.o * 0.45} />{/each}
                </g>
                <g fill="none" stroke-linecap="round" filter="url(#warp)">
                  {#each lines as l}<path d={l.d} stroke-width={l.w} stroke={l.o > 0.85 ? '#000' : '#3a3a3a'} opacity={l.o > 0.85 ? 1 : l.main ? l.o * 0.82 : l.o * 0.6} />{/each}
                </g>
                <g fill="#000" filter="url(#warp)">
                  <path d="M70 1405 108 1408 120 1436 106 1474 139 1485 184 1502 230 1514V1520H70z" /><path d="M1294 1150h20v80h-10zM1298 1318h14v130l-25 60 5 20h-20l-8-30 28-40-25-18 8-30 14-20z" />
                </g>
              </g>
            </g>
            <rect x="27" y="154.500" width="454" height="454" fill="none" stroke="#f00" stroke-width="2.400" />
          </svg>
          <svg class="note" width="22" height="20" viewBox="0 0 22 20" fill="#fff" stroke="#666" stroke-width="1.300"><path d="M1 19V4l2-1V2h6v1h12v16h-3v-2h-2v2h-3v-2h-3v2H7v-2H4v2zM4 8h14M4 11h14M4 14h14" /></svg>
        </div>
        <div class="status">
          <div class="scale">{@render t('1:83,377', 42)}<svg width="6" height="4" viewBox="0 0 6 4"><path d="M0 0h6L3 4z" fill="#444" /></svg></div>
          <u></u>
          <div class="act"><svg width="16" height="16" viewBox="0 0 16 16" fill="none" stroke="#777"><path d="M.5 1.500h10v5H.5zM.5 6.500h5v5h-5zM5.500 1.500v5M10.500 6v2" /><path d="M11 7v9M6.500 11.500h9" stroke="#2277b5" stroke-width="1.400" /></svg></div>
          <svg width="13" height="13" viewBox="0 0 13 13" fill="none" stroke="#888"><path d="M.5.500h12v12H.5zM3.500 0v13M6.500 0v13M9.500 0v13M0 3.500h13M0 6.500h13M0 9.500h13" /></svg>
          <svg width="16" height="16" viewBox="0 0 16 16" fill="none"><path d="M1 1.500h4v3H1zM11 8h4v3h-4z" stroke="#666" /><path d="M2 14l5-6 3 1 3-4M6 14h9" stroke="#4da3dc" stroke-dasharray="3 1" stroke-width="1.300" /><path d="M13 0v5M10.500 2.500h5" stroke="#666" /><path d="M0 12.500h3v3H0z" fill="#58a35c" /></svg>
          <svg width="16" height="16" viewBox="0 0 16 16" fill="none"><path d="M0 0h8v8H0z" fill="#cfe9cb" /><path d="M8 0v16M0 8h16" stroke="#555" stroke-dasharray="2 1" /><circle cx="8" cy="8" r="2" fill="#555" /></svg>
          <svg width="17" height="16" viewBox="0 0 17 16" fill="none"><path d="M1 11V4l4 7V4" stroke="#4da3dc" stroke-width="1.800" /><path d="M8.500 0v16M8.500 15l7-8" stroke="#777" stroke-width="1.200" /><path d="M11 2c3-1 4 2 3 4M12 4l2 2.500L16.500 5" stroke="#4da3dc" stroke-width="1.300" /></svg>
          {@render chev(9, '#222')}
          <u></u>
          <div class="coord">{@render t('110.8797830°W 34.3975777°N', 153)}</div>
          {@render chev(10)}
          <u></u>
          <div class="sel"><svg width="16" height="16" viewBox="0 0 16 16" fill="none"><path d="M7 1h8v8h-3" stroke="#bbb" stroke-width="1.200" /><circle cx="5" cy="8" r="4" fill="#e6f3fb" stroke="#9bcbe9" stroke-width="1.300" /><path d="M3 8h4M5 6v4" stroke="#9bcbe9" /><path d="M8 11l4 4" stroke="#e3c49f" stroke-width="2.200" /></svg><span>0</span></div>
          <u></u>
          <svg width="13" height="13" viewBox="0 0 13 13" fill="none" stroke="#aaa" stroke-width="1.200"><path d="M.6.600h11.800v11.800H.6zM3 3l4 4 1 5M7 7l4-5" /></svg>
          <u></u>
          <svg width="12" height="14" viewBox="0 0 12 14" fill="#666"><path d="M1 0h4v14H1zM7.500 0h4v14h-4z" /></svg>
          <u></u>
          <svg width="16" height="16" viewBox="0 0 16 16" fill="none" stroke="#4da3dc" stroke-width="2.400"><path d="M1.500 7C2 1 10 0 13 5M14.500 9C14 15 6 16 3 11" /><path d="M15.500 0v6.500H9zM.5 16V9.500H7z" fill="#4da3dc" stroke="none" /></svg>
        </div>
      </div>

      <aside class="panel geo">
        <div class="phead blue">{@render t('Geoprocessing', 102, 's16')}{@render winbtns()}</div>
        <div class="gtitle">
          <svg width="20" height="20" viewBox="0 0 20 20" fill="none" stroke="#555" stroke-width="1.200"><circle cx="10" cy="10" r="8.600" /><path d="M15 10H6M9.500 6 5.500 10l4 4" stroke-width="1.800" /></svg>
          {@render t('Focal Statistics', 97, 's14')}
          <svg width="20" height="20" viewBox="0 0 20 20" fill="none" stroke="#555" stroke-width="1.200"><circle cx="10" cy="10" r="8.600" /><path d="M10 4.500v11M4.500 10h11" stroke-width="1.800" /></svg>
        </div>
        <div class="info">
          <svg class="ii" width="13" height="13" viewBox="0 0 13 13"><circle cx="6.500" cy="6.500" r="6.200" fill="#4da3dc" /><path d="M5 5.500h2.300V10M4.700 10h3.800M6.500 2.500v1.600" stroke="#fff" stroke-width="1.500" fill="none" /></svg>
          <div>
            {@render t('No pending edits.', 93)}
            <div class="eicons">
              {@render small('undo')}{@render small('redo')}
              <svg width="16" height="15" viewBox="0 0 16 15" fill="none"><path d="M.7.700h11v11H.7z" fill="#f0eaf6" stroke="#b7a6cf" stroke-width="1.400" /><path d="M1 4h10M3.500 11V7.500H8" stroke="#b7a6cf" stroke-width="1.400" /><path d="M7 13l7-7 2 2-7 6z" fill="#ead98b" /></svg>
              <svg width="16" height="16" viewBox="0 0 16 16" fill="none" stroke="#b9bfc4" stroke-width="1.300"><path d="M1 3h11M2.500 3v12h8V3M5 5v8M8 5v8M4.500 3V1h4v2" /><path d="M8 15l6-9" stroke="#ead9a8" stroke-width="2.600" /></svg>
            </div>
          </div>
        </div>
        <div class="gtabs"><div class="on">{@render t('Parameters', 69, 's12 b')}</div><div>{@render t('Environments', 77, 's12')}</div><b></b><svg width="17" height="17" viewBox="0 0 17 17" fill="none" stroke="#4da3dc"><circle cx="8.500" cy="8.500" r="7.700" stroke-width="1.200" /><path d="M6 6.500c0-3.500 5-3.300 5-.3 0 1.800-2.500 1.800-2.500 4M8.500 11.500v2" stroke-width="1.500" /></svg></div>
        <div class="form">
          <div class="fl">{@render t('Input raster', 60)}</div>
          <div class="fr"><div class="inp clipin">{@render t('50y381_AZ_USFS_3DEP_Processing_2019_D20.tif', 249, 'k')}{@render chev(7)}</div><svg width="16" height="14" viewBox="0 0 16 14"><path d="M0 13V1h5l1 1.500h8V5h2l-2 8z" fill="#d9c44b" /><path d="M1.500 6.500 3 4h11" stroke="#f7f0c0" fill="none" /></svg></div>
          <div class="fl l2">{@render t('Output raster', 70)}</div>
          <div class="fr"><div class="inp pad">{@render t('MeanC20', 50)}</div><svg width="16" height="14" viewBox="0 0 16 14"><path d="M0 13V1h5l1 1.500h8V5h2l-2 8z" fill="#d9c44b" /><path d="M1.500 6.500 3 4h11" stroke="#f7f0c0" fill="none" /></svg></div>
          <div class="nb">
            <div class="nbrow first"><b>{@render t('Neighborhood', 78)}</b><div class="inp sm">{@render t('Circle', 30)}{@render chev(7)}</div></div>
            <div class="nbrow"><em>{@render t('Radius', 35)}</em><div class="inp sm end">{@render t('20', 12)}</div></div>
            <div class="nbrow last"><em>{@render t('Units type', 53)}</em><div class="inp sm units">{@render t('Cell', 20)}<div class="dd">{@render chev(7, '#123')}</div></div></div>
          </div>
          <div class="fl l3">{@render t('Statistics type', 72)}</div>
          <div class="inp pad full">{@render t('Mean', 30, 'k')}{@render chev(7)}</div>
          <div class="ign">{@render check(true)}{@render t('Ignore NoData in calculations', 156)}</div>
        </div>
        <div class="run"><svg width="17" height="17" viewBox="0 0 17 17"><circle cx="8.500" cy="8.500" r="7.600" fill="#deeef9" stroke="#4da3dc" stroke-width="1.300" /><path d="M6.500 4.500v8l6-4z" fill="#3f9adb" /></svg>{@render t('Run', 21, 's12')}<b></b>{@render chev(7)}</div>
      </aside>

      <aside class="panel catalog">
        <div class="phead">{@render t('Catalog', 52, 's16')}{@render winbtns()}</div>
        <div class="ctabs"><div class="on">{@render t('Project', 42, 's12 b')}</div><div>{@render t('Portal', 34, 's12')}</div><div>{@render t('Computer', 58, 's12')}</div><div>{@render t('Favorites', 52, 's12')}</div><b></b><svg width="14" height="14" viewBox="0 0 14 14" stroke="#555" stroke-width="2.600"><path d="M0 2h14M0 7h14M0 12h14" /></svg></div>
        <div class="csb">
          <svg width="18" height="18" viewBox="0 0 18 18" fill="none" stroke="#b5b5b5" stroke-width="1.200"><circle cx="9" cy="9" r="8.200" /><path d="M14 9H5M8.500 5.500 5 9l3.500 3.500" stroke-width="1.600" /></svg>
          <div class="hb"><svg width="13" height="12" viewBox="0 0 13 12" fill="none" stroke="#999"><path d="M1 6l5.500-5L12 6M2.500 5v6M10.500 5v6M5 7h2v4" /><path d="M0 11.500h13" stroke="#bfe0ba" /></svg></div>
          <div class="fb"><svg width="16" height="17" viewBox="0 0 16 17" fill="none" stroke="#555" stroke-width="1.200"><path d="M.8 1h14.400L10 8v8H6V8zM2.500 3.500h11" /></svg></div>
          <div class="sb">{@render t('Search Project', 73, 'it')}<b></b>{@render mag()}{@render chev(9)}</div>
        </div>
        <div class="treewrap">
          <div class="tree">
            {#each tree as [lv, ex, ic, label, w, sel]}
              <div class="tr lv{lv}"><span class="ex">{#if ex}{@render small(ex)}{/if}</span><div class="item" class:sel>{@render small(ic)}{@render t(label, w)}</div></div>
            {/each}
          </div>
          <div class="sbar">
            <svg width="8" height="8" viewBox="0 0 8 8" fill="none" stroke="#555" stroke-width="1.300"><path d="M1 5.500 4 2.500 7 5.500" /></svg>
            <div class="thumb"></div>
            {@render chev(8)}
          </div>
        </div>
      </aside>
    </main>
  </div>
  <div class="edge"><i></i><b></b></div>
  <div class="taskbar"><i></i><b></b></div>
</div>

<style>
  :global(body) { overflow: hidden; background: #ebebeb; }
  * { box-sizing: border-box; }
  svg { display: block; flex: none; }
  .desktop { width: 1921px; height: 1042px; display: grid; grid-template: 1040px 2px / 1918px 3px; font: 11.500px/16px 'Noto Sans', 'Open Sans', sans-serif; color: #4a4a4a; overflow: hidden; }
  .edge { display: flex; flex-direction: column; background: #f4f4f4; }
  .edge i { height: 86px; background: linear-gradient(#46604f 45%, #5e8068 50%); }
  .edge b { height: 26px; border-bottom: 1px solid #bbb; background: #fff; }
  .taskbar { grid-column: 1 / 3; background: #17222e; display: flex; padding-left: 400px; }
  .taskbar i { width: 46px; margin-left: 34px; background: #b8702c; }
  .taskbar b { width: 48px; margin-left: 542px; background: #4a5260; }
  .app { background: #ebebeb; display: flex; flex-direction: column; min-width: 0; }
  .t { display: inline-block; white-space: pre; }
  .s11 { font-size: 11px; } .s12 { font-size: 12px; } .s13 { font-size: 13px; } .s14 { font-size: 14px; } .s16 { font-size: 15.500px; }
  .it { font-style: italic; color: #666; } .b { font-weight: 600; } .m { font-weight: 500; } .k { color: #1a1a1a; }

  header { background: #f7f9f9; height: 153px; border-bottom: 1px solid #bdbfc1; }
  .titlebar { height: 33px; padding-top: 1px; display: grid; align-items: center; grid-template-columns: 813px 107px 689px 70px 39px 43px 41px 44px 44px 28px; }
  .qat { display: grid; align-items: center; padding-left: 5px; grid-template-columns: 29px 28px 27px 19px 17px 20px 17px 18px 17px 17px 24px 10px; }
  .cmdsearch { width: 180px; height: 24px; border: 1px solid #999; border-radius: 3px; background: #fafbfb; display: flex; align-items: center; gap: 6px; padding-left: 7px; margin-top: -1px; }
  .cmdsearch :global(.it) { color: #888; }
  .avatar { width: 24px; height: 24px; border-radius: 50%; background: #cdf0e8; color: #1d5d50; font-size: 9px; line-height: 24px; text-align: center; margin-top: -1px; }
  .help { font-size: 15px; }
  .tabs { height: 24px; display: grid; align-items: center; grid-template-columns: 76px 59px 66px 79px 59px 56px 80px 66px 92px 63px 141px; padding-left: 16px; color: #222; }
  .tab { height: 24px; padding-top: 4px; width: max-content; }
  .tab.on { font-weight: 600; box-shadow: inset 0 -3px #0079c1; margin-left: -1px; padding-left: 1px; }
  .ctx { height: 24px; border: 1px solid #d9dbdc; border-radius: 3px; background: #fff; display: flex; align-items: center; justify-content: center; margin-top: -1px; }
  .ribbon { display: flex; padding-top: 4px; color: #222; }
  .ribbon section { height: 87px; border-right: 1px solid #b9babb; display: flex; flex-direction: column; justify-content: space-between; position: relative; }
  .ribbon footer { text-align: center; color: #555; height: 15px; line-height: 15px; margin-bottom: -3px; }
  .row { display: grid; }
  .g1 { width: 259px; } .g2 { width: 436px; } .g3 { width: 131px; } .g4 { width: 659px; } .g5 { width: 135px; }
  .g1 footer { padding-right: 17px; }
  .launch { position: absolute; right: 3px; bottom: 0; }
  .gp { grid-template-columns: 52px 97px 64px 38px; }
  .pg { grid-template-columns: 58px 58px; padding-left: 7px; }
  .wf { grid-template-columns: 68px 60px 48px 76px 62px 60px 82px 78px 56px 54px; padding-left: 8px; }
  .rs { grid-template-columns: 66px 54px; padding-left: 7px; }
  .cmd { display: flex; flex-direction: column; align-items: center; padding-top: 2px; }
  .cmd .big { margin-bottom: 3px; }
  .lab { height: 13px; line-height: 13px; display: flex; align-items: center; gap: 2px; white-space: nowrap; }
  .off { color: #999; }
  .ready { background: #c4e7fa; border-radius: 2px; height: 72px; margin-top: -1px; padding-top: 3px; color: #2a4a60; }
  .stack { display: flex; flex-direction: column; gap: 8px; padding-top: 3px; }
  .stack div { display: flex; align-items: center; gap: 4px; height: 16px; }
  .stack i { width: 1px; }
  .gallery { margin: 2px 0 0 9px; width: 418px; height: 66px; border: 1px solid #b9babb; background: #fff; display: grid; grid-template-columns: repeat(5, 80px) 16px; color: #4a4a4a; }
  .gal { padding-top: 4px; }
  .gal .big { margin-bottom: 2px; }
  .gal .lab { height: 11px; line-height: 11px; font-size: 11px; }
  .gal .lab + .lab { padding-top: 0; }
  .scroll { border-left: 1px solid #b9babb; display: grid; grid-template-rows: 21px 22px 21px; background: #f2f4f4; }
  .scroll div { display: grid; place-items: center; }
  .scroll div + div { border-top: 2px solid #c3c5c9; }
  .g2 footer { padding-right: 2px; }
  .collapse { margin: 77px 0 0 281px; }
  :global(.num) { font: 700 8px 'Liberation Sans', sans-serif; fill: #555; }
  :global(.fx) { font: italic 14px 'Noto Sans', sans-serif; fill: #555; }

  main { display: grid; grid-template-columns: 552px 578px 324px 439px; column-gap: 5px; padding: 6px 0 0 4px; height: 881px; }
  .panel { background: #f7f9f9; border: 1px solid #c9cbcc; border-radius: 3px; overflow: hidden; min-width: 0; display: flex; flex-direction: column; height: 875px; }
  .geo { border: 1px solid #0079c1; width: 323px; }
  .phead { display: flex; justify-content: space-between; align-items: center; height: 30px; padding: 1px 5px 0 6px; color: #222; flex: none; }
  .blue { color: #0079c1; padding-left: 6px; }
  .winbtns { display: flex; align-items: center; gap: 8px; margin-top: -2px; }
  .csearch { display: flex; align-items: center; gap: 8px; padding: 0 3px 0 4px; height: 26px; }
  .box { flex: 1; height: 24px; border: 1px solid #8e9091; background: #fff; display: flex; align-items: center; padding: 0 5px; margin-left: -1px; }
  .box b, .sb b, .ctabs b, .gtabs b, .run b { flex: 1; }
  .box .chev, .sb .chev { margin-left: 11px; }
  .views { display: flex; gap: 8.300px; padding: 8px 0 0 17px; }
  .underline { margin: 5px 0 0 15px; width: 225px; height: 4px; display: flex; align-items: center; background: linear-gradient(transparent 2px, #dfe1e2 2px, #dfe1e2 4px, transparent 4px); }
  .underline b { width: 32px; height: 4px; background: #0079c1; }
  .dorder { padding: 13px 0 6px 15px; }
  .ly { display: flex; align-items: center; height: 25px; flex: none; }
  .l0 { padding-left: 0; gap: 5px; margin-top: -1px; }
  .l0 > :global(svg:first-child) { margin: 0 -5px 0 -1px; }
  .l1 { padding-left: 9px; gap: 5px; }
  .l1 > :global(svg:first-child) { margin-right: -5px; }
  .ext .check { margin-right: 4px; }
  .swatch { width: 20px; height: 16px; border: 2px solid #f22; margin: 4px 0 5px 29px; flex: none; }
  .vlabel { height: 20px; padding: 3px 0 0 28px; }
  .ramp { display: flex; gap: 6px; padding: 2px 0 2px 29px; margin-top: 1px; height: 52px; }
  .bar { width: 20px; height: 48px; background: linear-gradient(#fff, #000); }
  .vals { display: flex; flex-direction: column; justify-content: space-between; align-items: flex-start; height: 51px; margin-top: -3px; }

  .view { display: flex; flex-direction: column; height: 875px; width: 577px; }
  .vtabs { height: 25px; border-bottom: 3px solid #d2d5da; display: flex; justify-content: space-between; align-items: center; padding-right: 4px; }
  .vtab { height: 23px; background: #d2d5da; display: flex; align-items: center; padding: 2px 7px 0; width: 129px; border-radius: 3px 3px 0 0; gap: 5px; }
  .vtab > :global(svg:last-child) { margin-left: 4px; }
  .mapbox { position: relative; height: 825px; border-left: 1px solid #d2d5da; overflow: hidden; flex: none; }
  .note { position: absolute; right: 7px; bottom: 7px; }
  .status { height: 25px; background: #f7f9f9; border: 1px solid #d2d5da; border-top: 0; display: grid; align-items: center; justify-items: center; grid-template-columns: 6px 99px 10px 20px 20px 20px 20px 19px 18px 10px 171px 20px 27px 18px 18px 14px 15px 15px 15px 15px; }
  .status > :first-child { grid-column: 2; justify-self: stretch; }
  .status u { width: 1px; height: 14px; background: #999; }
  .scale { height: 22px; border: 1px solid #8e9091; background: #fff; display: flex; align-items: center; justify-content: space-between; padding: 0 4px 0 5px; color: #222; }
  .act { width: 20px; height: 20px; background: #99ccee; border: 1px solid #2277b5; display: grid; place-items: center; }
  .coord { padding-left: 8px; }
  .sel { display: flex; align-items: center; gap: 3px; color: #888; }

  .gtitle { display: flex; justify-content: space-between; align-items: center; height: 27px; padding: 0 5px 0 6px; }
  .info { height: 53px; background: #deeef9; margin-top: 8px; display: flex; align-items: center; padding-left: 13px; gap: 16px; color: #00619b; flex: none; }
  .info > div { height: 43px; }
  .eicons { display: grid; grid-template-columns: 25px 26px 27px 16px; align-items: center; padding-left: 6px; margin-top: 5px; }
  .gtabs { display: flex; height: 25px; padding: 5px 6px 0 9px; gap: 10px; flex: none; align-items: flex-start; }
  .gtabs div { height: 19px; }
  .gtabs .on, .ctabs .on { border-bottom: 2px solid #0079c1; }
  .form { padding: 10px 8px 0 18px; display: flex; flex-direction: column; }
  .fl { height: 15px; line-height: 15px; }
  .l2 { margin-top: 9px; } .l3 { margin-top: 9px; }
  .fr { display: flex; align-items: center; gap: 7px; }
  .inp { height: 22px; border: 1px solid #8e9091; background: #fff; display: flex; align-items: center; justify-content: space-between; width: 269px; padding: 0 5px 0 2px; overflow: hidden; }
  .pad { padding-left: 4px; } .full { width: 295px; }
  .clipin { justify-content: flex-start; gap: 8px; }
  .clipin > :global(.t) { margin-left: -5px; }
  .nb { margin: 5px 0 0 -16px; height: 76px; padding: 4px 0 0 16px; background: linear-gradient(90deg, #cfe0f2, transparent 14px); }
  .nbrow { display: flex; align-items: center; height: 22px; margin-bottom: 4px; justify-content: flex-end; gap: 4px; }
  .nbrow + .nbrow + .nbrow { margin-top: -2px; }
  .nbrow b { flex: 1; font-weight: 400; } .nbrow em { font-style: normal; color: #888; }
  .inp.sm { width: 147px; padding-left: 2px; } .inp.end { justify-content: flex-end; padding-right: 2px; }
  .inp.units { padding-right: 0; border-color: #bbb; }
  .dd { width: 17px; height: 22px; background: #c4e7fa; border: 1px solid #6ab8e6; display: grid; place-items: center; margin-right: -1px; }
  .ign { display: flex; align-items: center; gap: 6px; margin-top: 10px; height: 16px; }
  .run { margin: auto 6px 6px auto; width: 85px; height: 24px; border: 1px solid #555; border-radius: 3px; background: #fff; display: flex; align-items: center; gap: 6px; padding: 0 4px 0 11px; flex: none; color: #333; }

  .ctabs { display: flex; padding: 0 8px 0 6px; gap: 10px; height: 23px; flex: none; }
  .ctabs div { height: 22px; padding-top: 2px; }
  .ctabs svg { margin-top: 5px; }
  .csb { display: flex; align-items: center; margin: 8px 5px 0 5px; height: 24px; flex: none; }
  .hb, .fb, .sb { height: 24px; border: 1px solid #8e9091; background: #fff; display: flex; align-items: center; justify-content: center; }
  .hb { width: 20px; margin-left: 5px; border-color: #ccc; border-right: 0; background: none; } .fb { width: 24px; } .sb { flex: 1; border-left: 0; padding: 0 5px; }
  .treewrap { display: grid; grid-template-columns: 415px 17px; margin-top: 5px; flex: 1; overflow: hidden; height: 782px; }
  .tree { overflow: hidden; padding-top: 2px; }
  .tr { display: flex; height: 24px; align-items: center; }
  .lv0 { padding-left: 6px; } .lv1 { padding-left: 22px; } .lv2 { padding-left: 38px; } .lv3 { padding-left: 54px; } .lv4 { padding-left: 70px; }
  .ex { width: 16px; height: 16px; flex: none; }
  .item { display: flex; align-items: center; gap: 8px; height: 24px; padding-left: 4px; flex: 1; }
  .sel.item { background: #cacaca; box-shadow: inset 0 0 0 1px #8e9091; padding-left: 4px; color: #4a4a4a; gap: 8px; }
  .sbar { background: #ececec; display: flex; flex-direction: column; align-items: center; padding: 4px 0 6px; height: 782px; }
  .thumb { width: 9px; height: 365px; border-radius: 5px; background: #b5b5b5; margin: 7px 0 auto; }
</style>
